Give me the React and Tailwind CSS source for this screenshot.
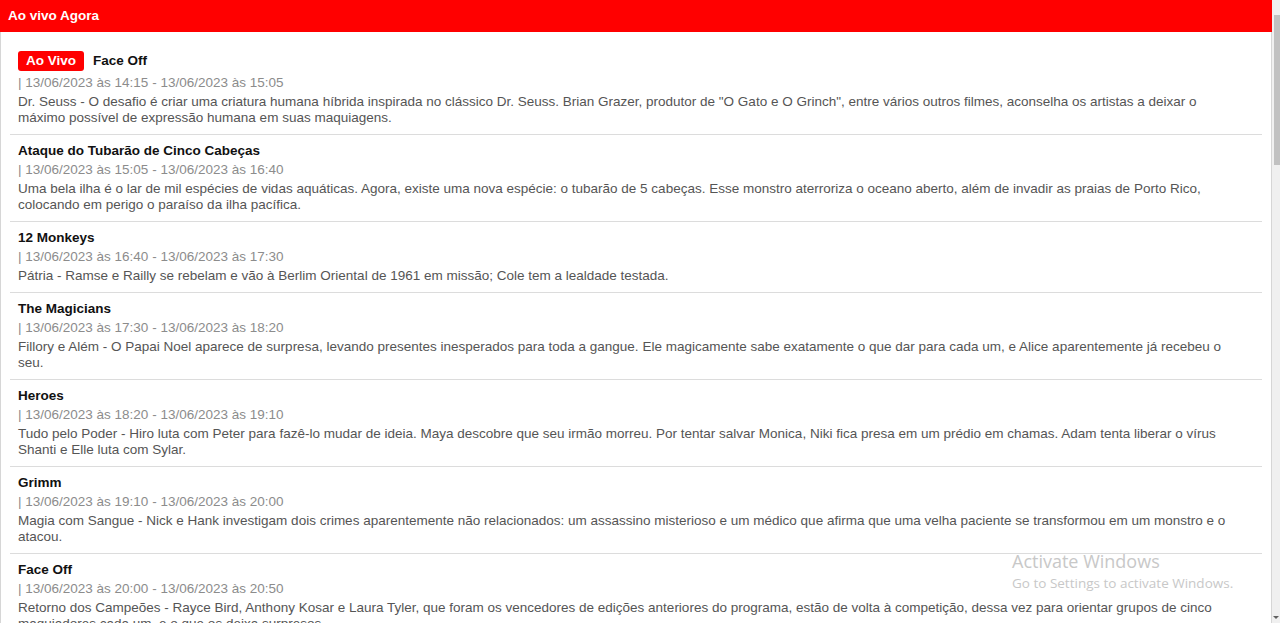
const programas = [
  {
    titulo: "Face Off",
    inicio: "13/06/2023 às 14:15",
    fim: "13/06/2023 às 15:05",
    descricao:
      'Dr. Seuss - O desafio é criar uma criatura humana híbrida inspirada no clássico Dr. Seuss. Brian Grazer, produtor de "O Gato e O Grinch", entre vários outros filmes, aconselha os artistas a deixar o máximo possível de expressão humana em suas maquiagens.',
    aoVivo: true,
  },
  {
    titulo: "Ataque do Tubarão de Cinco Cabeças",
    inicio: "13/06/2023 às 15:05",
    fim: "13/06/2023 às 16:40",
    descricao:
      "Uma bela ilha é o lar de mil espécies de vidas aquáticas. Agora, existe uma nova espécie: o tubarão de 5 cabeças. Esse monstro aterroriza o oceano aberto, além de invadir as praias de Porto Rico, colocando em perigo o paraíso da ilha pacífica.",
  },
  {
    titulo: "12 Monkeys",
    inicio: "13/06/2023 às 16:40",
    fim: "13/06/2023 às 17:30",
    descricao:
      "Pátria - Ramse e Railly se rebelam e vão à Berlim Oriental de 1961 em missão; Cole tem a lealdade testada.",
  },
  {
    titulo: "The Magicians",
    inicio: "13/06/2023 às 17:30",
    fim: "13/06/2023 às 18:20",
    descricao:
      "Fillory e Além - O Papai Noel aparece de surpresa, levando presentes inesperados para toda a gangue. Ele magicamente sabe exatamente o que dar para cada um, e Alice aparentemente já recebeu o seu.",
  },
  {
    titulo: "Heroes",
    inicio: "13/06/2023 às 18:20",
    fim: "13/06/2023 às 19:10",
    descricao:
      "Tudo pelo Poder - Hiro luta com Peter para fazê-lo mudar de ideia. Maya descobre que seu irmão morreu. Por tentar salvar Monica, Niki fica presa em um prédio em chamas. Adam tenta liberar o vírus Shanti e Elle luta com Sylar.",
  },
  {
    titulo: "Grimm",
    inicio: "13/06/2023 às 19:10",
    fim: "13/06/2023 às 20:00",
    descricao:
      "Magia com Sangue - Nick e Hank investigam dois crimes aparentemente não relacionados: um assassino misterioso e um médico que afirma que uma velha paciente se transformou em um monstro e o atacou.",
  },
  {
    titulo: "Face Off",
    inicio: "13/06/2023 às 20:00",
    fim: "13/06/2023 às 20:50",
    descricao:
      "Retorno dos Campeões - Rayce Bird, Anthony Kosar e Laura Tyler, que foram os vencedores de edições anteriores do programa, estão de volta à competição, dessa vez para orientar grupos de cinco maquiadores cada um, e o que os deixa surpresos.",
  },
];

function Programa({ item }) {
  return (
    <li className="mx-[9px] border-b border-[#dcdcdc] pt-2 pr-[18px] pb-2 pl-2">
      {item.aoVivo ? (
        <div className="flex items-center gap-[9px]">
          <span className="rounded-[3px] bg-[#f00] px-2 text-[13.5px] font-bold leading-5 text-white">
            Ao Vivo
          </span>
          <span className="text-[13.5px] font-bold leading-5 text-[#111]">{item.titulo}</span>
        </div>
      ) : (
        <h3 className="text-[13.5px] font-bold leading-4 text-[#111]">{item.titulo}</h3>
      )}
      <p className={`${item.aoVivo ? "mt-1" : "mt-[3px]"} text-[13.5px] leading-4 text-[#8c8c8c]`}>
        | {item.inicio} - {item.fim}
      </p>
      <p className="mt-[3px] text-[13.5px] leading-4 text-[#555]">{item.descricao}</p>
    </li>
  );
}

export default function App() {
  return (
    <div className="relative flex h-[623px] overflow-hidden bg-white font-['Liberation_Sans',Arial,sans-serif]">
      <div className="flex min-w-0 flex-1 flex-col">
        <header className="flex h-8 shrink-0 items-center bg-[#f00] px-2">
          <h1 className="text-[13.5px] font-bold text-white">Ao vivo Agora</h1>
        </header>
        <div className="flex-1 shrink-0 border-x border-[#d6d6d6] pt-[11px]">
          <ul>
            {programas.map((item, i) => (
              <Programa key={i} item={item} />
            ))}
          </ul>
        </div>
      </div>

      {/* barra de rolagem */}
      <div className="relative w-2 bg-[#f0f0f0]">
        <div className="absolute top-[15px] right-0 h-[150px] w-[6px] bg-[#c1c1c1]" />
        <div className="absolute bottom-[4px] right-[1px] h-0 w-0 border-x-[3px] border-t-[3px] border-x-transparent border-t-[#606060]" />
      </div>

      <div className="pointer-events-none absolute top-[549px] left-[1012px] font-['Open_Sans','Noto_Sans',sans-serif] text-[#c8c8c8]">
        <p className="text-[18px] leading-6">Activate Windows</p>
        <p className="text-[13.5px] leading-5">Go to Settings to activate Windows.</p>
      </div>
    </div>
  );
}
